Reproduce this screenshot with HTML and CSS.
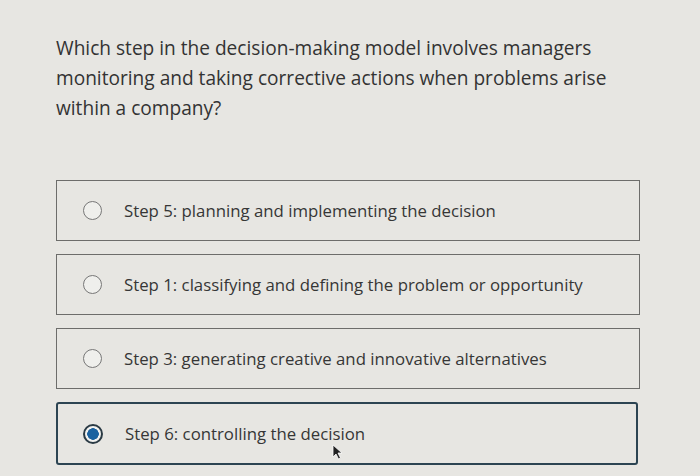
FILE: index.html
```html
<!DOCTYPE html>
<html>
<head>
<meta charset="utf-8">
<link rel="stylesheet" href="styles.css">
</head>
<body>
<main class="quiz">
  <p class="question">Which step in the decision-making model involves managers monitoring and taking corrective actions when problems arise within a company?</p>
  <div class="options">
    <label class="option">
      <span class="radio"></span>
      <span class="label">Step 5: planning and implementing the decision</span>
    </label>
    <label class="option">
      <span class="radio"></span>
      <span class="label">Step 1: classifying and defining the problem or opportunity</span>
    </label>
    <label class="option">
      <span class="radio"></span>
      <span class="label">Step 3: generating creative and innovative alternatives</span>
    </label>
    <label class="option selected">
      <span class="radio"></span>
      <span class="label">Step 6: controlling the decision</span>
      <svg class="cursor" width="12" height="16" viewBox="0 0 12 16"><path d="M1 1 L1 13 L4 10 L6.5 15 L8.5 14 L6 9 L10 9 Z" fill="#222" stroke="#fff" stroke-width="0.8"/></svg>
    </label>
  </div>
</main>
</body>
</html>
```

FILE: styles.css
```css
html, body {
  margin: 0;
  padding: 0;
  background: #e7e6e2;
}
body {
  font-family: "Open Sans", "Noto Sans", sans-serif;
  color: #3a3a3a;
  width: 700px;
  height: 476px;
  overflow: hidden;
}
.quiz {
  padding: 33px 0 0 56px;
}
.question {
  margin: 0;
  width: 580px;
  font-size: 19.1px;
  line-height: 30px;
  color: #333;
}
.options {
  margin-top: 57px;
  display: flex;
  flex-direction: column;
  gap: 13px;
  width: 584px;
}
.option {
  position: relative;
  height: 59px;
  border: 1px solid #6d6d6b;
  display: flex;
  align-items: center;
  padding-left: 26px;
  gap: 22px;
  box-sizing: content-box;
}
.radio {
  width: 17px;
  height: 17px;
  border: 1.5px solid #777;
  border-radius: 50%;
  flex: none;
  background: #efefec;
}
.label {
  font-size: 16.8px;
  color: #363636;
}
.option.selected {
  border: 2px solid #2c4452;
  border-radius: 3px;
  height: 59px;
  width: 553px;
  padding-left: 25px;
}
.option.selected .radio {
  border: 2px solid #2a3a44;
  background: radial-gradient(circle, #1a62a0 0 5.5px, #f2f2f0 6px);
  width: 16px;
  height: 16px;
}
.cursor {
  position: absolute;
  left: 274px;
  top: 40px;
}
```
